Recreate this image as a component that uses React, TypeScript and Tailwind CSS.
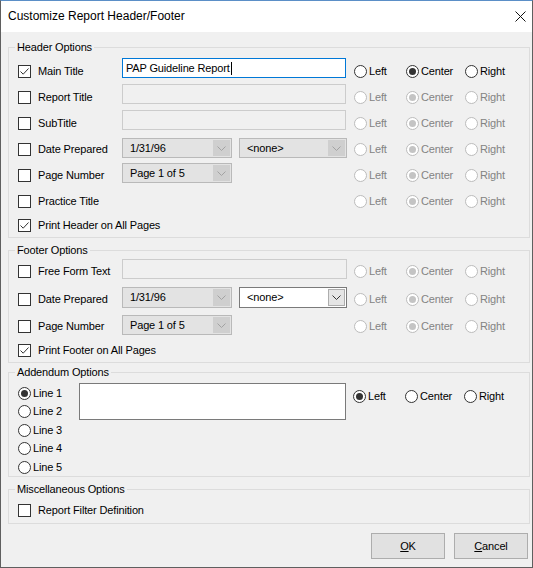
import React from "react";

type Align = "left" | "center" | "right";

function CheckBox({ checked }: { checked?: boolean }) {
  return (
    <span className="flex h-[13px] w-[13px] shrink-0 items-center justify-center border border-[#333333] bg-white">
      {checked && (
        <svg width="11" height="11" viewBox="0 0 11 11">
          <path d="M1.5 5.5 L4.2 8.2 L9.5 2.5" fill="none" stroke="#333333" strokeWidth="1" />
        </svg>
      )}
    </span>
  );
}

function RadioDot({ checked, disabled }: { checked?: boolean; disabled?: boolean }) {
  return (
    <span
      className={`flex h-[13px] w-[13px] shrink-0 items-center justify-center rounded-full border bg-white ${
        disabled ? "border-[#bcbcbc]" : "border-[#333333]"
      }`}
    >
      {checked && (
        <span className={`h-[7px] w-[7px] rounded-full ${disabled ? "bg-[#c4c4c4]" : "bg-[#333333]"}`} />
      )}
    </span>
  );
}

function RadioOption({
  label,
  checked,
  disabled,
  className = "",
}: {
  label: string;
  checked?: boolean;
  disabled?: boolean;
  className?: string;
}) {
  return (
    <label className={`flex items-center ${className}`}>
      <RadioDot checked={checked} disabled={disabled} />
      <span className={`ml-[2px] ${disabled ? "text-[#838383]" : "text-black"}`}>{label}</span>
    </label>
  );
}

function AlignRadios({ value, disabled }: { value: Align; disabled?: boolean }) {
  return (
    <div className="flex items-center">
      <RadioOption label="Left" checked={value === "left"} disabled={disabled} className="w-[52px]" />
      <RadioOption label="Center" checked={value === "center"} disabled={disabled} className="w-[59px]" />
      <RadioOption label="Right" checked={value === "right"} disabled={disabled} />
    </div>
  );
}

function CheckLabel({ label, checked, fixed = true }: { label: string; checked?: boolean; fixed?: boolean }) {
  return (
    <label className={`flex items-center ${fixed ? "w-[104px] shrink-0" : ""}`}>
      <CheckBox checked={checked} />
      <span className="ml-[7px] whitespace-nowrap">{label}</span>
    </label>
  );
}

function TextBox({
  value = "",
  focused,
  disabled,
  className = "",
}: {
  value?: string;
  focused?: boolean;
  disabled?: boolean;
  className?: string;
}) {
  const look = disabled
    ? "border-[#cccccc] bg-[#f0f0f0]"
    : focused
    ? "border-[#0078d7] bg-white"
    : "border-[#7a7a7a] bg-white";
  return (
    <div className={`flex items-center border pl-[3px] ${look} ${className}`}>
      <span className="whitespace-nowrap">{value}</span>
      {focused && <span className="ml-[1px] h-[13px] w-[1px] bg-black" />}
    </div>
  );
}

function Chevron({ color }: { color: string }) {
  return (
    <svg width="9" height="5" viewBox="0 0 9 5">
      <path d="M0.5 0.5 L4.5 4.5 L8.5 0.5" fill="none" stroke={color} strokeWidth="1" />
    </svg>
  );
}

function Combo({ value, disabled, className = "" }: { value: string; disabled?: boolean; className?: string }) {
  return (
    <div
      className={`flex items-center border pl-[7px] ${
        disabled ? "border-[#b9b9b9] bg-[#e3e3e3]" : "border-[#7a7a7a] bg-white"
      } ${className}`}
    >
      <span className="flex-1 whitespace-nowrap">{value}</span>
      {disabled ? (
        <span className="mr-[1px] flex h-[calc(100%-2px)] w-[17px] items-center justify-center bg-[#cfcfcf]">
          <Chevron color="#a2a2a2" />
        </span>
      ) : (
        <span className="mr-[1px] flex h-[calc(100%-2px)] w-[17px] items-center justify-center border border-[#adadad] bg-[#e5e5e5]">
          <Chevron color="#333333" />
        </span>
      )}
    </div>
  );
}

function Group({ title, className, children }: { title: string; className: string; children: React.ReactNode }) {
  return (
    <fieldset className={`ml-[7px] mr-[2px] border border-[#dcdcdc] pl-[9px] ${className}`}>
      <legend className="-ml-[3px] px-[2px] leading-[13px]">{title}</legend>
      {children}
    </fieldset>
  );
}

function DialogButton({ children }: { children: React.ReactNode }) {
  return (
    <button className="flex h-[26px] w-[74px] items-center justify-center border border-[#adadad] bg-[#e1e1e1] text-black">
      {children}
    </button>
  );
}

export default function App() {
  return (
    <div className="flex h-[568px] w-[533px] flex-col border border-[#5f5f5f] border-t-[#5b8fc7] bg-[#f0f0f0] font-['Liberation_Sans',Arial,sans-serif] text-[11px] leading-[13px] tracking-[-0.15px] text-black">
      {/* title bar */}
      <div className="flex h-[31px] shrink-0 items-center justify-between bg-white pl-[7px] pr-[6px]">
        <span className="text-[12px] tracking-normal">Customize Report Header/Footer</span>
        <svg width="11" height="11" viewBox="0 0 11 11">
          <path d="M0.5 0.5 L10.5 10.5 M10.5 0.5 L0.5 10.5" stroke="#111111" strokeWidth="1" />
        </svg>
      </div>

      {/* Header */}
      <Group title="Header Options" className="mt-[9px] pt-[4px]">
        <div className="flex h-[26px] items-center">
          <CheckLabel label="Main Title" checked />
          <div className="flex h-full w-[232px] items-start">
            <TextBox value="PAP Guideline Report" focused className="h-[20px] w-[224px]" />
          </div>
          <AlignRadios value="center" />
        </div>
        <div className="flex h-[26px] items-center">
          <CheckLabel label="Report Title" />
          <div className="flex h-full w-[232px] items-start">
            <TextBox disabled className="h-[20px] w-[224px]" />
          </div>
          <AlignRadios value="center" disabled />
        </div>
        <div className="flex h-[26px] items-center">
          <CheckLabel label="SubTitle" />
          <div className="flex h-full w-[232px] items-start">
            <TextBox disabled className="h-[20px] w-[224px]" />
          </div>
          <AlignRadios value="center" disabled />
        </div>
        <div className="flex h-[26px] items-center">
          <CheckLabel label="Date Prepared" />
          <div className="flex h-full w-[232px] items-start gap-[7px]">
            <Combo value="1/31/96" disabled className="mt-[2px] h-[20px] w-[110px]" />
            <Combo value="<none>" disabled className="mt-[2px] h-[20px] w-[108px]" />
          </div>
          <AlignRadios value="center" disabled />
        </div>
        <div className="flex h-[26px] items-center">
          <CheckLabel label="Page Number" />
          <div className="flex h-full w-[232px] items-start">
            <Combo value="Page 1 of 5" disabled className="mt-[1px] h-[20px] w-[110px]" />
          </div>
          <AlignRadios value="center" disabled />
        </div>
        <div className="flex h-[26px] items-center">
          <CheckLabel label="Practice Title" />
          <div className="w-[232px]" />
          <AlignRadios value="center" disabled />
        </div>
        <div className="flex h-[23px] items-center">
          <CheckLabel label="Print Header on All Pages" checked fixed={false} />
        </div>
      </Group>

      {/* Footer */}
      <Group title="Footer Options" className="mt-[6px] pt-[1px]">
        <div className="flex h-[27px] items-center">
          <CheckLabel label="Free Form Text" />
          <div className="flex h-full w-[232px] items-start">
            <TextBox disabled className="mt-[1px] h-[20px] w-[225px]" />
          </div>
          <AlignRadios value="center" disabled />
        </div>
        <div className="flex h-[28px] items-center">
          <CheckLabel label="Date Prepared" />
          <div className="flex h-full w-[232px] items-start gap-[7px]">
            <Combo value="1/31/96" disabled className="mt-[2px] h-[21px] w-[110px]" />
            <Combo value="<none>" className="mt-[2px] h-[21px] w-[108px]" />
          </div>
          <AlignRadios value="center" disabled />
        </div>
        <div className="flex h-[26px] items-center">
          <CheckLabel label="Page Number" />
          <div className="flex h-full w-[232px] items-start">
            <Combo value="Page 1 of 5" disabled className="mt-[2px] h-[20px] w-[110px]" />
          </div>
          <AlignRadios value="center" disabled />
        </div>
        <div className="flex h-[23px] items-center">
          <CheckLabel label="Print Footer on All Pages" checked fixed={false} />
        </div>
      </Group>

      {/* Addendum */}
      <Group title="Addendum Options" className="mt-[3px] pt-[4px]">
        <div className="flex items-start">
          <div className="flex w-[61px] flex-col pt-[1px]">
            <RadioOption label="Line 1" checked className="h-[18px]" />
            <RadioOption label="Line 2" className="h-[19px]" />
            <RadioOption label="Line 3" className="h-[18px]" />
            <RadioOption label="Line 4" className="h-[19px]" />
            <RadioOption label="Line 5" className="h-[18px]" />
          </div>
          <TextBox className="h-[37px] w-[267px]" />
          <div className="ml-[7px] mt-[2px] flex h-[22px] items-center">
            <AlignRadios value="left" />
          </div>
        </div>
      </Group>

      {/* Misc */}
      <Group title="Miscellaneous Options" className="mt-[6px] pt-[1px]">
        <div className="flex h-[26px] items-center">
          <CheckLabel label="Report Filter Definition" fixed={false} />
        </div>
      </Group>

      <div className="mt-[9px] flex justify-end gap-[9px] pr-[4px]">
        <DialogButton>
          <span className="underline underline-offset-[1px]">O</span>K
        </DialogButton>
        <DialogButton>
          <span className="underline underline-offset-[1px]">C</span>ancel
        </DialogButton>
      </div>
    </div>
  );
}
